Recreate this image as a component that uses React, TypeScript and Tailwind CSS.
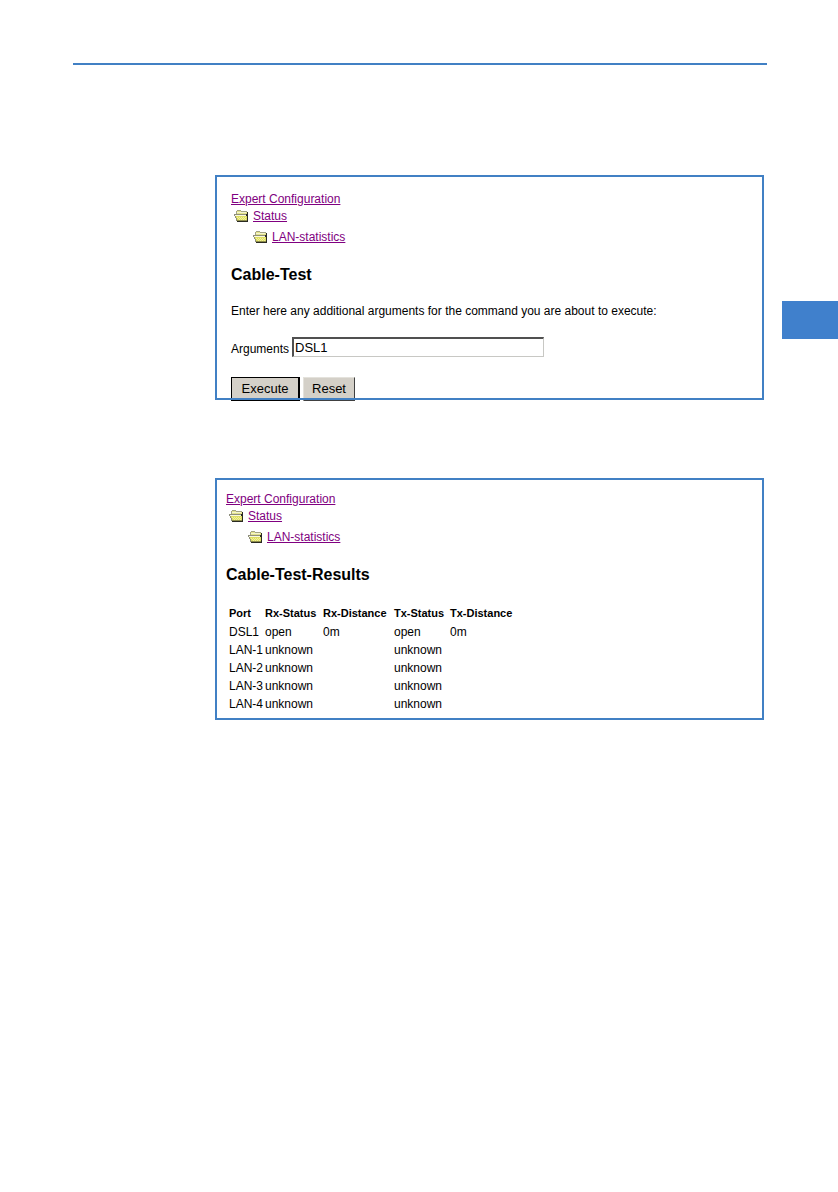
import React from 'react';

interface PortResult {
  port: string;
  rxStatus: string;
  rxDistance: string;
  txStatus: string;
  txDistance: string;
}

const results: PortResult[] = [
  { port: 'DSL1', rxStatus: 'open', rxDistance: '0m', txStatus: 'open', txDistance: '0m' },
  { port: 'LAN-1', rxStatus: 'unknown', rxDistance: '', txStatus: 'unknown', txDistance: '' },
  { port: 'LAN-2', rxStatus: 'unknown', rxDistance: '', txStatus: 'unknown', txDistance: '' },
  { port: 'LAN-3', rxStatus: 'unknown', rxDistance: '', txStatus: 'unknown', txDistance: '' },
  { port: 'LAN-4', rxStatus: 'unknown', rxDistance: '', txStatus: 'unknown', txDistance: '' },
];

const FolderIcon: React.FC = () => (
  <svg className="h-3 w-4 shrink-0" viewBox="0 0 16 12" shapeRendering="crispEdges" aria-hidden="true">
    {/* back flap */}
    <path d="M2 1h1V0h4v1h6v9H2z" fill="#e2e28c" />
    <path d="M3 0h4v1H3zM2 1h1v3H2zM7 1h6v1H7z" fill="#a2a284" />
    <path d="M3 2h9v1H3z" fill="#f4f4d0" />
    {/* front flap */}
    <path d="M0 4h12v2h1v5H2V8H1V6H0z" fill="#dede62" />
    <path d="M0 4h12v1H0zM0 5h1v1H0zM1 6h1v2H1zM2 8h1v3H2z" fill="#8e8e7c" />
    <path d="M1 5h11v1H1z" fill="#fafadc" />
    <path d="M3 7h1v1H3zM5 7h1v1H5zM7 7h1v1H7zM9 7h1v1H9zM11 7h1v1h-1zM4 8h1v1H4zM6 8h1v1H6zM8 8h1v1H8zM10 8h1v1h-1zM5 9h1v1H5zM7 9h1v1H7zM9 9h1v1H9zM11 9h1v1h-1z" fill="#f2f29c" />
    <path d="M3 10h10v1H3z" fill="#8e8e4c" />
    {/* shadow */}
    <path d="M13 2h1v10H3v-1h10zM12 4h1v2h-1z" fill="#2a2a22" />
  </svg>
);

const Breadcrumb: React.FC = () => (
  <nav className="text-[12px] leading-4 text-[#800080]">
    <a href="#config" className="block w-fit underline">Expert Configuration</a>
    <div className="mt-px ml-[3px] flex items-center gap-[3px]">
      <FolderIcon />
      <a href="#status" className="underline">Status</a>
    </div>
    <div className="mt-[5px] ml-[22px] flex items-center gap-[3px]">
      <FolderIcon />
      <a href="#lan-statistics" className="underline">LAN-statistics</a>
    </div>
  </nav>
);

// The frame is painted on top, so the cut-off buttons end under it
const Panel: React.FC<{ className: string; children: React.ReactNode }> = ({ className, children }) => (
  <section
    className={`relative after:pointer-events-none after:absolute after:inset-0 after:border-2 after:border-[#4180c4] ${className}`}
  >
    {children}
  </section>
);

const CableTestForm: React.FC = () => (
  <Panel className="pt-4 pl-4">
    <Breadcrumb />
    <h1 className="mt-5 text-[16px] leading-5 font-bold">Cable-Test</h1>
    <p className="mt-[18px] leading-4">
      Enter here any additional arguments for the command you are about to execute:
    </p>
    <form onSubmit={e => e.preventDefault()}>
      <div className="mt-[18px] flex items-end gap-[3px]">
        <label htmlFor="arguments" className="leading-4">Arguments</label>
        <input
          id="arguments"
          type="text"
          defaultValue="DSL1"
          className="h-5 w-[252px] border border-t-2 border-l-2 border-t-[#505050] border-r-[#c8c8c4] border-b-[#c8c8c4] border-l-[#505050] px-px text-[13px] leading-4 outline-none"
        />
      </div>
      <div className="mt-5 -mb-px flex gap-[3px] text-[13px]">
        <button type="submit" className="h-6 w-[69px] border border-r-2 border-black bg-[#d4d0c8]">
          Execute
        </button>
        <button
          type="reset"
          className="h-6 w-[52px] border border-t-[#e4e2dc] border-r-[#404040] border-b-[#404040] border-l-[#e4e2dc] bg-[#d4d0c8]"
        >
          Reset
        </button>
      </div>
    </form>
  </Panel>
);

const CableTestResults: React.FC = () => (
  <Panel className="pt-[13px] pb-[7px] pl-[11px]">
    <Breadcrumb />
    <h1 className="mt-5 text-[16px] leading-5 font-bold">Cable-Test-Results</h1>
    <table className="mt-[18px] ml-[3px] w-[288px] table-fixed text-left leading-4">
      <colgroup>
        <col className="w-[36px]" />
        <col className="w-[58px]" />
        <col className="w-[71px]" />
        <col className="w-[56px]" />
        <col className="w-[67px]" />
      </colgroup>
      <thead>
        <tr className="h-5 text-[11px] whitespace-nowrap">
          <th>Port</th>
          <th>Rx-Status</th>
          <th>Rx-Distance</th>
          <th>Tx-Status</th>
          <th>Tx-Distance</th>
        </tr>
      </thead>
      <tbody>
        {results.map(row => (
          <tr key={row.port} className="h-[18px] whitespace-nowrap">
            <td>{row.port}</td>
            <td>{row.rxStatus}</td>
            <td>{row.rxDistance}</td>
            <td>{row.txStatus}</td>
            <td>{row.txDistance}</td>
          </tr>
        ))}
      </tbody>
    </table>
  </Panel>
);

export default function App() {
  return (
    <div className="min-h-screen bg-white pt-[63px] font-['Liberation_Sans',Arial,sans-serif] text-[12px] text-black">
      <header className="mr-[71px] ml-[73px] border-t-2 border-[#4180c4]" />
      <div className="mt-[110px] flex items-start">
        <main className="ml-[215px] flex min-w-0 flex-1 flex-col gap-[78px]">
          <CableTestForm />
          <CableTestResults />
        </main>
        <aside className="mt-[126px] ml-[18px] h-[38px] w-14 bg-[#4080cc]" />
      </div>
    </div>
  );
}
